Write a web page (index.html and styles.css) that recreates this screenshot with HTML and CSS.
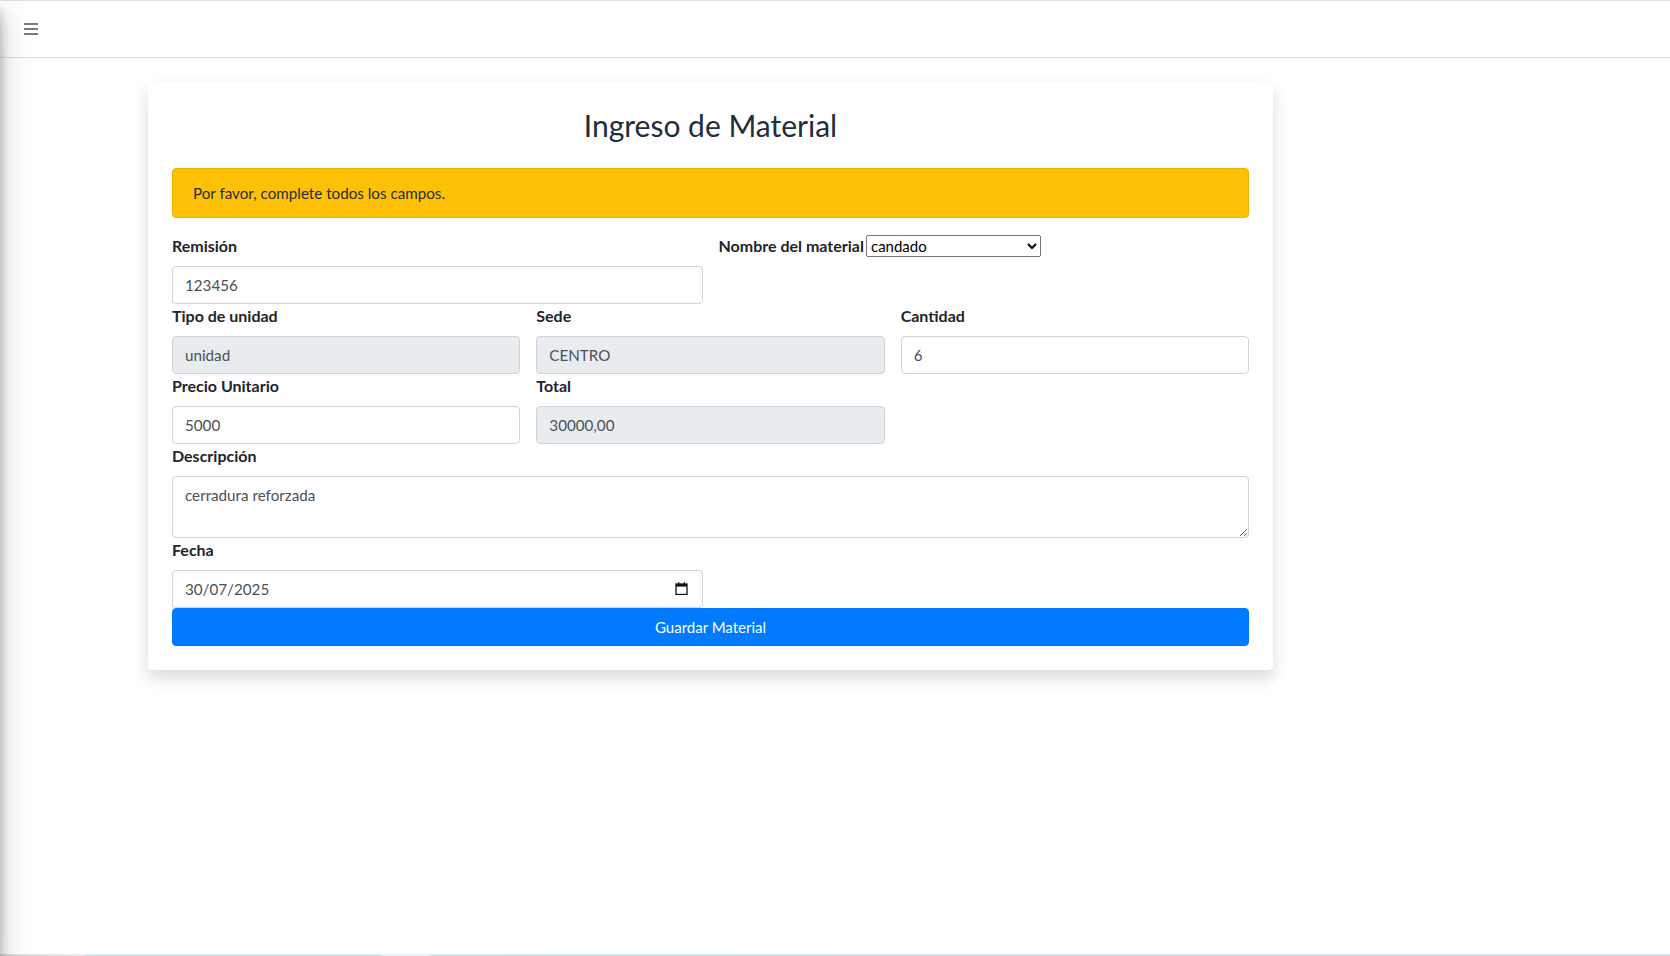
FILE: index.html
```html
<!DOCTYPE html>
<html lang="es">
<head>
<meta charset="utf-8">
<title>Ingreso de Material</title>
<link rel="stylesheet" href="styles.css">
</head>
<body>
<aside class="sidebar"></aside>
<header class="navbar">
  <button class="menu-btn" aria-label="Menú">
    <span class="bar"></span><span class="bar"></span><span class="bar"></span>
  </button>
</header>
<main class="content">
  <section class="card">
    <h2 class="title">Ingreso de Material</h2>
    <div class="alert">Por favor, complete todos los campos.</div>
    <form class="form">
      <div class="row cols-2">
        <div class="field">
          <label class="label">Remisión</label>
          <input class="control" type="text" value="123456">
        </div>
        <div class="field">
          <label class="label">Nombre del material</label>
          <select class="native-select"><option>candado</option></select>
        </div>
      </div>
      <div class="row cols-3">
        <div class="field">
          <label class="label">Tipo de unidad</label>
          <input class="control readonly" type="text" value="unidad" readonly>
        </div>
        <div class="field">
          <label class="label">Sede</label>
          <input class="control readonly" type="text" value="CENTRO" readonly>
        </div>
        <div class="field">
          <label class="label">Cantidad</label>
          <input class="control" type="text" value="6">
        </div>
      </div>
      <div class="row cols-3">
        <div class="field">
          <label class="label">Precio Unitario</label>
          <input class="control" type="text" value="5000">
        </div>
        <div class="field">
          <label class="label">Total</label>
          <input class="control readonly" type="text" value="30000,00" readonly>
        </div>
      </div>
      <div class="field">
        <label class="label">Descripción</label>
        <textarea class="control area" rows="2">cerradura reforzada</textarea>
      </div>
      <div class="row cols-2">
        <div class="field">
          <label class="label">Fecha</label>
          <div class="date-wrap">
            <input class="control" type="text" value="30/07/2025">
            <svg class="cal-icon" width="13" height="13" viewBox="0 0 13 13" aria-hidden="true">
              <rect x="1" y="2" width="11" height="10.5" fill="none" stroke="#111" stroke-width="1.3"/>
              <rect x="1" y="2" width="11" height="2.6" fill="#111"/>
              <rect x="3" y="0.2" width="1.3" height="2.5" fill="#111"/>
              <rect x="8.7" y="0.2" width="1.3" height="2.5" fill="#111"/>
            </svg>
          </div>
        </div>
      </div>
      <button type="button" class="btn-primary">Guardar Material</button>
    </form>
  </section>
</main>
<div class="bottom-strip"></div>
</body>
</html>
```

FILE: styles.css
```css
* { box-sizing: border-box; }

html, body {
  margin: 0;
  padding: 0;
  height: 100%;
}

body {
  font-family: "Lato", "Liberation Sans", sans-serif;
  font-size: 16px;
  line-height: 1.5;
  color: #212529;
  background: #ffffff;
  overflow: hidden;
}

.sidebar {
  position: fixed;
  top: 0;
  left: -250px;
  width: 250px;
  height: 100vh;
  background: #343a40;
  box-shadow: 0 14px 28px rgba(0,0,0,.25), 0 10px 10px rgba(0,0,0,.22);
  z-index: 10;
}

.navbar {
  height: 58px;
  border-top: 1px solid #dee2e6;
  border-bottom: 1px solid #dee2e6;
  background: #fff;
  display: flex;
  align-items: center;
  padding-left: 24px;
}

.menu-btn {
  border: 0;
  background: transparent;
  padding: 0;
  width: 14px;
  height: 12px;
  display: flex;
  flex-direction: column;
  justify-content: space-between;
  margin-top: 0;
  cursor: pointer;
}

.menu-btn .bar {
  display: block;
  height: 2px;
  width: 14px;
  background: #7a7a7a;
}

.content {
  padding: 24px 0 0 148px;
}

.card {
  width: 1125px;
  background: #fff;
  border-radius: 4px;
  padding: 24px;
  box-shadow: 0 .5rem 1rem rgba(0,0,0,.15);
}

.title {
  margin: 0 0 24px;
  font-size: 30px;
  font-weight: 400;
  line-height: 38.4px;
  text-align: center;
  color: #1f2d3d;
}

.alert {
  background: #ffc107;
  border: 1px solid #edb100;
  border-radius: 4px;
  color: #1f2d3d;
  padding: 12px 20px;
  margin-bottom: 16px;
  font-size: 15.2px;
  line-height: 24px;
}

.row {
  display: grid;
  column-gap: 16px;
}

.cols-2 { grid-template-columns: repeat(2, 1fr); }
.cols-3 { grid-template-columns: repeat(3, 1fr); }

.field { min-width: 0; }

.label {
  display: inline-block;
  font-weight: 700;
  margin-bottom: 8px;
  line-height: 24px;
}

.control {
  display: block;
  width: 100%;
  height: 38px;
  padding: 6px 12px;
  font-family: inherit;
  font-size: 15.2px;
  line-height: 24px;
  color: #495057;
  background: #fff;
  border: 1px solid #ced4da;
  border-radius: 4px;
  outline: none;
}

.readonly { background: #e9ecef; }

.area {
  height: 62px;
  resize: vertical;
}

.native-select {
  width: 175px;
  height: 22px;
  font-family: inherit;
  font-size: 15px;
  color: #000;
  vertical-align: top;
  margin: 1px 0 0 -2px;
}

.date-wrap { position: relative; }

.cal-icon {
  position: absolute;
  right: 15px;
  top: 12px;
}

.btn-primary {
  display: block;
  width: 100%;
  height: 38px;
  padding: 6px 12px;
  font-family: inherit;
  font-size: 15px;
  line-height: 24px;
  color: #fff;
  background: #007bff;
  border: 1px solid #007bff;
  border-radius: 4px;
  cursor: pointer;
}

.bottom-strip {
  position: fixed;
  left: 0;
  right: 0;
  bottom: 0;
  height: 2px;
  background: linear-gradient(to right, #d8d8d8 0, #ececec 85px, #d4e7ee 85px, #d4e7ee 381px, #e9f3f7 381px, #e9f3f7 429px, #d4e6ee 429px, #d8e2ee 100%);
}
```
